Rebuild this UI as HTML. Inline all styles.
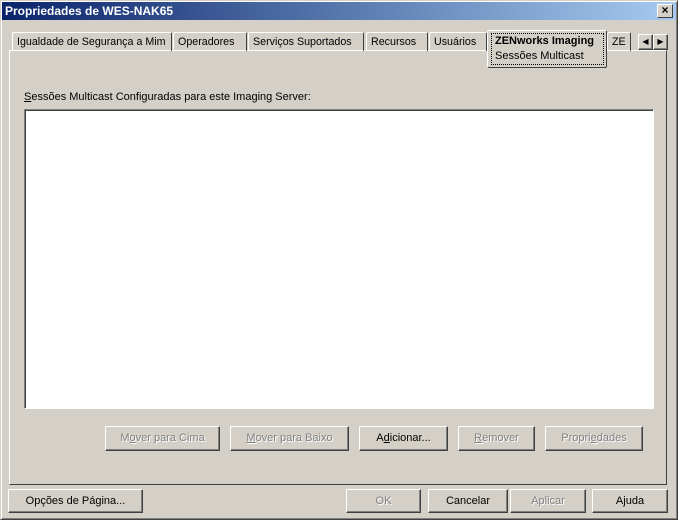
<!DOCTYPE html>
<html><head><meta charset="utf-8"><style>
*{box-sizing:border-box;margin:0;padding:0}
body{width:678px;height:520px;background:#d4d0c8;font:11px "Liberation Sans",sans-serif;color:#000;position:relative;overflow:hidden}
.win{position:absolute;left:0;top:0;width:678px;height:520px;border:1px solid;border-color:#d4d0c8 #404040 #404040 #d4d0c8;box-shadow:inset 1px 1px #fff,inset -1px -1px #808080}
.title{position:absolute;left:2px;top:2px;width:674px;height:18px;background:linear-gradient(to right,#0a246a,#a6caf0);color:#fff;font-weight:bold;font-size:12px;line-height:18px;padding-left:3px}
.x{position:absolute;right:5px;top:4px;width:16px;height:14px;background:#d4d0c8;border:1px solid;border-color:#fff #404040 #404040 #fff;color:#000;font-size:12px;line-height:11px;text-align:center;font-weight:bold}
.tab{position:absolute;top:32px;height:19px;border:1px solid;border-bottom:none;border-color:#fff #404040 #404040 #fff;border-radius:2px 2px 0 0;line-height:19px;padding-left:4px;white-space:nowrap;overflow:hidden;font-size:10.7px}
.panel{position:absolute;left:9px;top:50px;width:658px;height:435px;border:1px solid;border-color:#fff #404040 #404040 #fff}
.list{position:absolute;left:24px;top:109px;width:630px;height:300px;background:#fff;border:1px solid;border-color:#808080 #fff #fff #808080;box-shadow:inset 1px 1px #404040}
.btn{position:absolute;border:1px solid;border-color:#fff #404040 #404040 #fff;box-shadow:inset -1px -1px #808080;text-align:center;background:#d4d0c8}
.dis{color:#808080;text-shadow:1px 1px #fff}
</style></head><body>
<div class="win"></div>
<div class="title">Propriedades de WES-NAK65</div>
<div class="x">×</div>
<div class="panel"></div>
<div class="tab" style="left:12px;width:160px">Igualdade de Segurança a Mim</div>
<div class="tab" style="left:173px;width:74px">Operadores</div>
<div class="tab" style="left:248px;width:116px">Serviços Suportados</div>
<div class="tab" style="left:366px;width:62px">Recursos</div>
<div class="tab" style="left:429px;width:58px">Usuários</div>
<div class="tab" style="left:607px;width:24px">ZE</div>
<div style="position:absolute;left:487px;top:30px;width:120px;height:38px;background:#d4d0c8;border:1px solid;border-color:#fff #404040 #404040 #fff;border-radius:2px;"></div>
<div style="position:absolute;left:491px;top:33px;width:113px;height:32px;border:1px dotted #000;padding-left:3px;line-height:15px"><b>ZENworks Imaging</b><br>Sessões Multicast</div>
<div class="btn" style="left:638px;top:34px;width:15px;height:16px;font-size:8px;line-height:14px">◀</div>
<div class="btn" style="left:653px;top:34px;width:15px;height:16px;font-size:8px;line-height:14px">▶</div>
<div style="position:absolute;left:24px;top:91px"><u>S</u>essões Multicast Configuradas para este Imaging Server:</div>
<div class="list"></div>
<div class="btn dis" style="left:105px;top:426px;width:115px;height:25px;line-height:23px">M<u>o</u>ver para Cima</div>
<div class="btn dis" style="left:230px;top:426px;width:119px;height:25px;line-height:23px"><u>M</u>over para Baixo</div>
<div class="btn" style="left:359px;top:426px;width:89px;height:25px;line-height:23px">A<u>d</u>icionar...</div>
<div class="btn dis" style="left:458px;top:426px;width:77px;height:25px;line-height:23px"><u>R</u>emover</div>
<div class="btn dis" style="left:545px;top:426px;width:98px;height:25px;line-height:23px">Propri<u>e</u>dades</div>
<div class="btn" style="left:8px;top:489px;width:135px;height:24px;line-height:22px">Opções de Pá<u>g</u>ina...</div>
<div class="btn dis" style="left:346px;top:489px;width:75px;height:24px;line-height:22px">OK</div>
<div class="btn" style="left:428px;top:489px;width:80px;height:24px;line-height:22px">Cancelar</div>
<div class="btn dis" style="left:510px;top:489px;width:76px;height:24px;line-height:22px">Aplicar</div>
<div class="btn" style="left:592px;top:489px;width:76px;height:24px;line-height:22px">Ajuda</div>
</body></html>
